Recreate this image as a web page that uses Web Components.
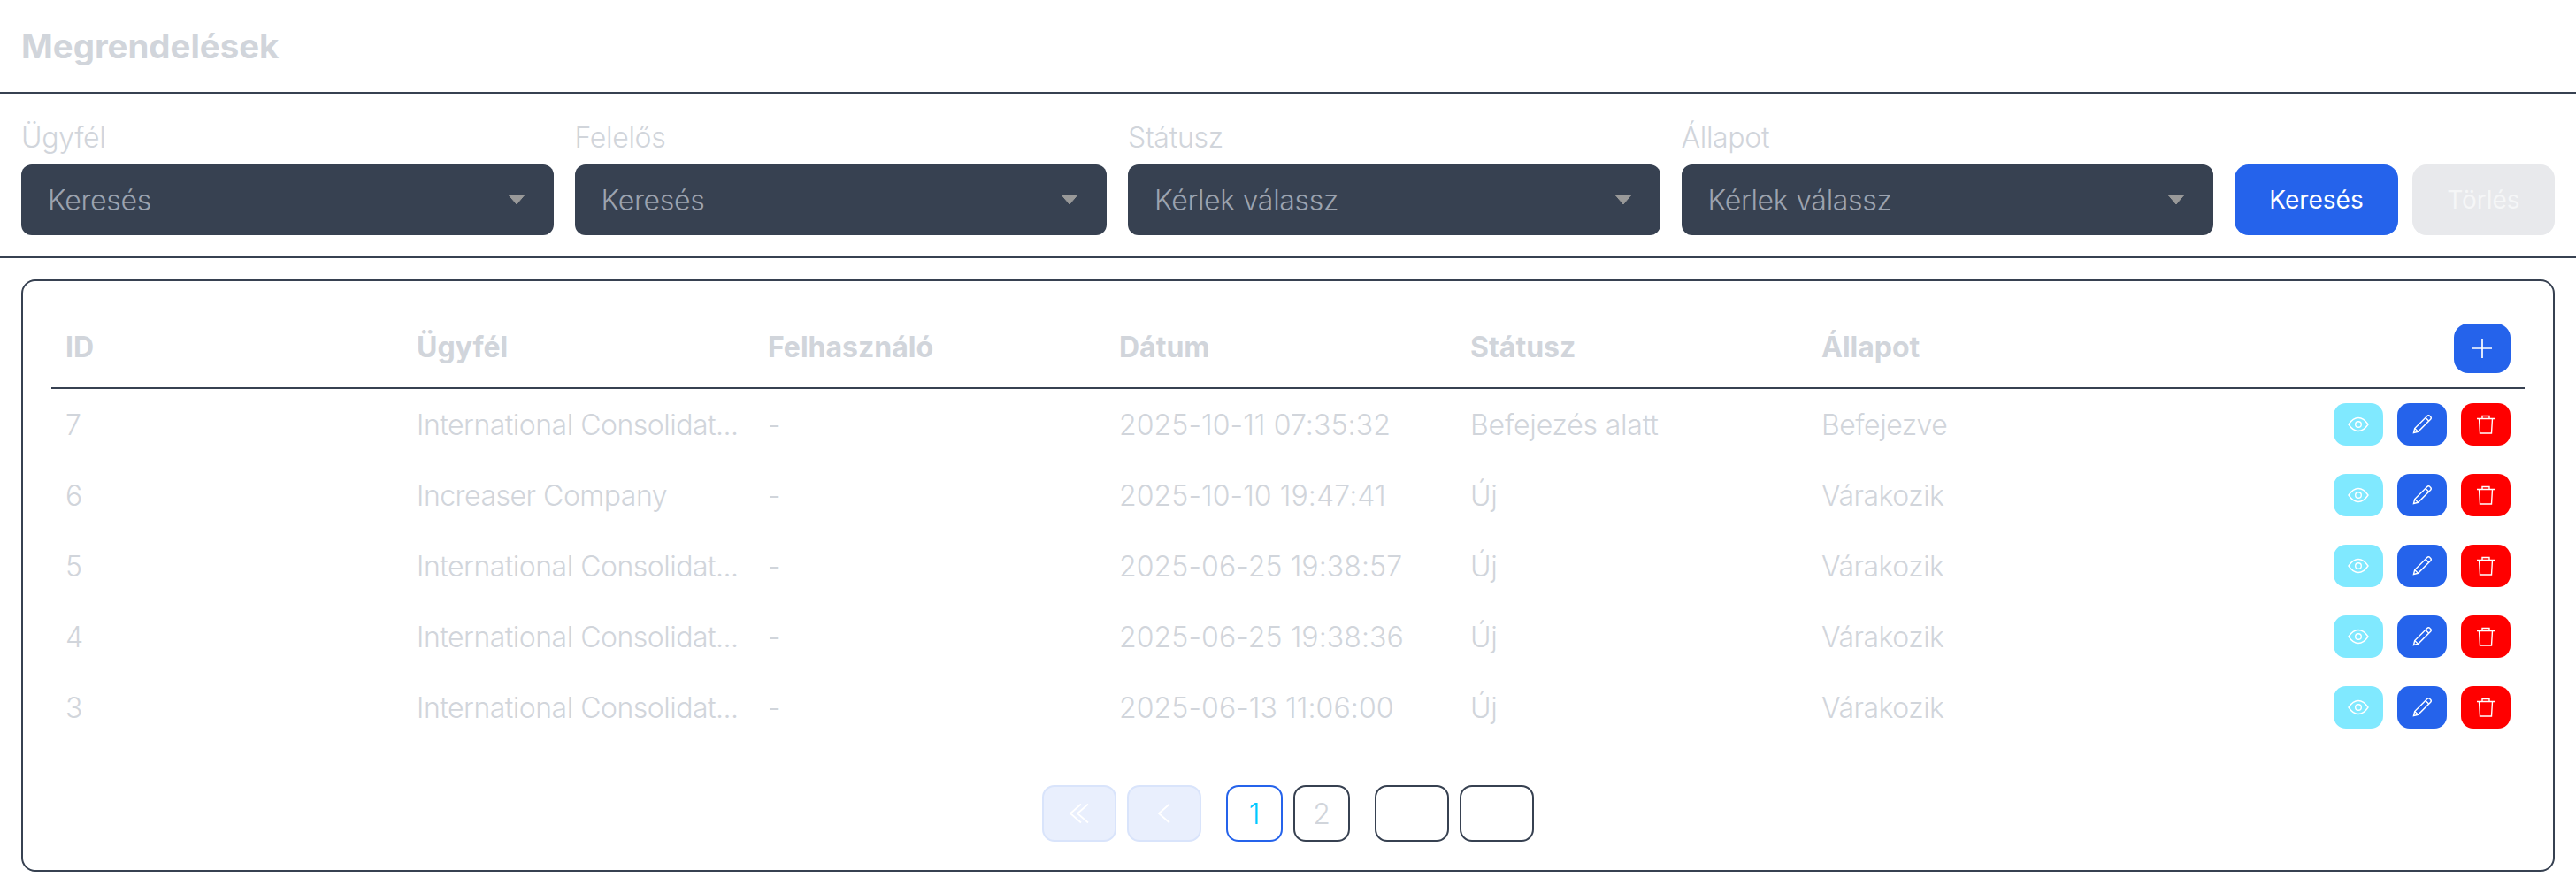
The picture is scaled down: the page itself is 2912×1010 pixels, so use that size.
<!DOCTYPE html>
<html lang="hu">
<head>
<meta charset="utf-8">
<title>Megrendelések</title>
<style>
  html, body {
    margin: 0;
    background: #fff;
    font-family: Inter, "Liberation Sans", sans-serif;
    color: #d1d5db;
  }
</style>
</head>
<body>
<orders-page></orders-page>
<script>
const ICONS = {
  plus: '<path d="M12 1v22M1 12h22"/>',
  eye: '<path d="M1 12c3-4.500 6.700-7.500 11-7.500S20 7.500 23 12c-3 4.500-6.700 7.500-11 7.500S4 16.500 1 12z"/><circle cx="12" cy="12" r="3.300"/>',
  pencil: '<path d="M2.500 21.500l1.200-5L17.800 2.400c.9-.9 2.200-.9 3 0l.8.8c.8.8.8 2.100 0 3L7.500 20.300z"/><path d="M16 4.500l3.500 3.500M3.700 16.500l3.800 3.800"/>',
  trash: '<path d="M2 5.500h20M8 5.500V2.500h8v3M4.500 5.500l1 16.500h13l1-16.500"/>',
  first: '<path d="M14 1.500 2 12l12 10.500M22 1.500 10 12l12 10.500"/>',
  prev: '<path d="M18 1.500 6 12l12 10.500"/>',
};

const icon = (name, size, width = 2) =>
  `<svg width="${size}" height="${size}" viewBox="0 0 24 24" fill="none" stroke="#fff" stroke-width="${width}">${ICONS[name]}</svg>`;

class FilterSelect extends HTMLElement {
  constructor() {
    super();
    this.attachShadow({ mode: "open" });
  }

  connectedCallback() {
    this.shadowRoot.innerHTML = `
      <style>
        :host { display: block; font-size: 32px; letter-spacing: -0.3px; min-width: 0; }
        label { display: block; height: 48px; line-height: 48px; margin-bottom: 8px; padding-top: 2px; box-sizing: border-box; color: #d1d5db; font-weight: 300; }
        .box {
          display: flex;
          align-items: center;
          justify-content: space-between;
          height: 80px;
          padding: 0 32px 0 30px;
          box-sizing: border-box;
          border-radius: 12px;
          background: #374151;
          color: #9ca3af;
          font-weight: 300;
        }
        svg { display: block; }
      </style>
      <label>${this.getAttribute("label")}</label>
      <div class="box">
        <span>${this.getAttribute("placeholder")}</span>
        <svg width="20" height="12" viewBox="0 0 20 12"><path d="M1.500 1h17L10 11z" fill="#999" stroke="#999" stroke-width="1" stroke-linejoin="round"/></svg>
      </div>
    `;
  }
}

class ActionButton extends HTMLElement {
  constructor() {
    super();
    this.attachShadow({ mode: "open" });
  }

  connectedCallback() {
    this.shadowRoot.innerHTML = `
      <style>
        :host {
          display: inline-flex;
          align-items: center;
          justify-content: center;
          box-sizing: border-box;
          width: 185px;
          height: 80px;
          border-radius: 16px;
          background: #2563eb;
          color: #fff;
          font-size: 28px;
          font-weight: 400;
        }
        :host([disabled]) { width: 161px; background: #e8e9ec; color: #f5f6f7; }
      </style>
      <slot></slot>
    `;
  }
}

class IconButton extends HTMLElement {
  constructor() {
    super();
    this.attachShadow({ mode: "open" });
  }

  connectedCallback() {
    const size = this.getAttribute("size") || 24;
    this.shadowRoot.innerHTML = `
      <style>
        :host {
          display: flex;
          align-items: center;
          justify-content: center;
          width: 56px;
          height: 48px;
          border-radius: 14px;
          background: var(--btn, #2563eb);
        }
        :host([tone="view"]) { --btn: #80e9ff; }
        :host([tone="delete"]) { --btn: #ff0000; }
        :host([tall]) { width: 64px; height: 56px; border-radius: 16px; }
        svg { display: block; }
      </style>
      ${icon(this.getAttribute("icon"), size, this.getAttribute("stroke") || 1.4)}
    `;
  }
}

class OrdersTable extends HTMLElement {
  constructor() {
    super();
    this.attachShadow({ mode: "open" });
    this.data = [
      { id: 7, client: "International Consolidat...", date: "2025-10-11 07:35:32", status: "Befejezés alatt", state: "Befejezve" },
      { id: 6, client: "Increaser Company", date: "2025-10-10 19:47:41", status: "Új", state: "Várakozik" },
      { id: 5, client: "International Consolidat...", date: "2025-06-25 19:38:57", status: "Új", state: "Várakozik" },
      { id: 4, client: "International Consolidat...", date: "2025-06-25 19:38:36", status: "Új", state: "Várakozik" },
      { id: 3, client: "International Consolidat...", date: "2025-06-13 11:06:00", status: "Új", state: "Várakozik" },
    ];
  }

  connectedCallback() {
    const rows = this.data
      .map(
        (row) => `
        <div class="row">
          <div class="cell">${row.id}</div>
          <div class="cell client">${row.client}</div>
          <div class="cell">-</div>
          <div class="cell date">${row.date}</div>
          <div class="cell tight">${row.status}</div>
          <div class="cell state">${row.state}</div>
          <div class="actions">
            <icon-button tone="view" icon="eye"></icon-button>
            <icon-button icon="pencil"></icon-button>
            <icon-button tone="delete" icon="trash"></icon-button>
          </div>
        </div>
      `,
      )
      .join("");

    this.shadowRoot.innerHTML = `
      <style>
        :host { display: block; font-size: 32px; color: #d1d5db; }
        .row {
          display: grid;
          grid-template-columns: repeat(6, 397px) 1fr;
          align-items: center;
          height: 80px;
        }
        .head {
          height: 88px;
          border-bottom: 2px solid #374151;
          font-weight: 700;
        }
        .cell {
          padding: 0 16px;
          overflow: hidden;
          white-space: nowrap;
          text-overflow: ellipsis;
          font-weight: 300;
        }
        .client { letter-spacing: -0.5px; }
        .date { letter-spacing: 0.1px; }
        .tight { letter-spacing: -0.2px; }
        .state { letter-spacing: -0.5px; }
        .head .cell { font-weight: 700; padding-bottom: 4px; letter-spacing: 0; }
        .actions { display: flex; justify-content: flex-end; gap: 16px; padding-right: 16px; }
      </style>
      <div class="row head">
        <div class="cell">ID</div>
        <div class="cell">Ügyfél</div>
        <div class="cell">Felhasználó</div>
        <div class="cell">Dátum</div>
        <div class="cell">Státusz</div>
        <div class="cell">Állapot</div>
        <div class="actions"><icon-button tall icon="plus" stroke="1.7"></icon-button></div>
      </div>
      ${rows}
    `;
  }
}

class PagerBar extends HTMLElement {
  constructor() {
    super();
    this.attachShadow({ mode: "open" });
  }

  connectedCallback() {
    this.shadowRoot.innerHTML = `
      <style>
        :host { display: flex; justify-content: center; gap: 28px; font-size: 32px; font-weight: 300; }
        .group { display: flex; gap: 12px; }
        .page {
          display: flex;
          align-items: center;
          justify-content: center;
          box-sizing: border-box;
          width: 84px;
          height: 64px;
          border: 2px solid #374151;
          border-radius: 14px;
          color: #d1d5db;
        }
        .num { width: 64px; }
        .off { background: #e9effd; border-color: #d9e4fb; }
        .on { border-color: #2563eb; color: #00c8ff; }
      </style>
      <div class="group">
        <div class="page off">${icon("first", 24, 1.8)}</div>
        <div class="page off">${icon("prev", 24, 1.8)}</div>
      </div>
      <div class="group">
        <div class="page num on">1</div>
        <div class="page num">2</div>
      </div>
      <div class="group">
        <div class="page"></div>
        <div class="page"></div>
      </div>
    `;
  }
}

class OrdersPage extends HTMLElement {
  constructor() {
    super();
    this.attachShadow({ mode: "open" });
  }

  connectedCallback() {
    this.shadowRoot.innerHTML = `
      <style>
        :host { display: block; }
        header {
          display: flex;
          align-items: center;
          height: 104px;
          padding: 0 24px;
          border-bottom: 2px solid #374151;
        }
        h1 { margin: 0; font-size: 38.400px; font-weight: 700; color: #d1d5db; }
        .filters {
          display: grid;
          grid-template-columns: repeat(4, minmax(0, 1fr)) auto;
          gap: 24px;
          align-items: end;
          padding: 24px;
          border-bottom: 2px solid #374151;
        }
        .buttons { display: flex; gap: 16px; }
        main { padding: 24px; }
        .card {
          padding: 32px;
          border: 2px solid #374151;
          border-radius: 16px;
        }
        pager-bar { margin-top: 48px; }
      </style>
      <header><h1>Megrendelések</h1></header>
      <section class="filters">
        <filter-select label="Ügyfél" placeholder="Keresés"></filter-select>
        <filter-select label="Felelős" placeholder="Keresés"></filter-select>
        <filter-select label="Státusz" placeholder="Kérlek válassz"></filter-select>
        <filter-select label="Állapot" placeholder="Kérlek válassz"></filter-select>
        <div class="buttons">
          <action-button>Keresés</action-button>
          <action-button disabled>Törlés</action-button>
        </div>
      </section>
      <main>
        <div class="card">
          <orders-table></orders-table>
          <pager-bar></pager-bar>
        </div>
      </main>
    `;
  }
}

customElements.define("filter-select", FilterSelect);
customElements.define("action-button", ActionButton);
customElements.define("icon-button", IconButton);
customElements.define("orders-table", OrdersTable);
customElements.define("pager-bar", PagerBar);
customElements.define("orders-page", OrdersPage);
</script>
</body>
</html>
